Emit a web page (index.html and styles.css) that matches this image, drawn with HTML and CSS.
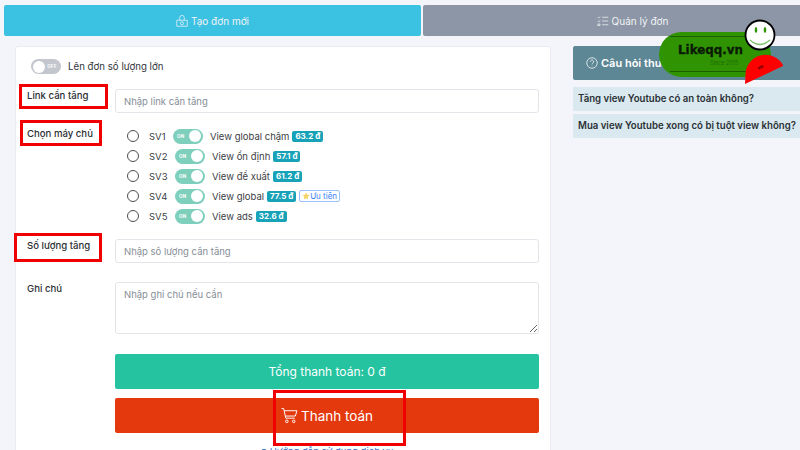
FILE: index.html
```html
<!DOCTYPE html>
<html lang="en">
<head>
    <meta charset="UTF-8">
    <meta name="viewport" content="width=device-width, initial-scale=1.0">
    <title>Likeqq.vn</title>
    <link rel="stylesheet" href="styles.css">
</head>
<body>
    <div class="tabs">
        <div class="tab tab-active">
            <svg class="tab-icon" viewBox="0 0 16 16"><path d="M1 7h14v8H1zM5 7V3.500a3 3 0 0 1 6 0V7"/><circle cx="8" cy="11" r="2"/></svg>
            Tạo đơn mới
        </div>
        <div class="tab tab-manage">
            <svg class="tab-icon" viewBox="0 0 16 16"><path d="M7 3h8M7 8h8M7 13h8M1 3l1.200 1.200L4.200 2M1 8l1.200 1.200L4.200 7M1 12h3v2H1z"/></svg>
            Quản lý đơn
        </div>
    </div>

    <div class="main">
        <div class="card">
            <div class="big-order">
                <span class="switch switch-off"><i></i><b>OFF</b></span>
                <span>Lên đơn số lượng lớn</span>
            </div>

            <div class="form-row row-link">
                <label class="form-label">Link cần tăng</label>
                <input class="form-input" type="text" placeholder="Nhập link cần tăng">
            </div>

            <div class="form-row row-server">
                <label class="form-label">Chọn máy chủ</label>
                <div class="servers">
                    <div class="server server-first">
                        <span class="radio"></span><span class="sv-name">SV1</span>
                        <span class="switch switch-on"><b>ON</b><i></i></span>
                        <span class="sv-desc">View global chậm</span><span class="price">63.2 đ</span>
                    </div>
                    <div class="server">
                        <span class="radio"></span><span class="sv-name">SV2</span>
                        <span class="switch switch-on"><b>ON</b><i></i></span>
                        <span class="sv-desc">View ổn định</span><span class="price">57.1 đ</span>
                    </div>
                    <div class="server">
                        <span class="radio"></span><span class="sv-name">SV3</span>
                        <span class="switch switch-on"><b>ON</b><i></i></span>
                        <span class="sv-desc">View đề xuất</span><span class="price">61.2 đ</span>
                    </div>
                    <div class="server">
                        <span class="radio"></span><span class="sv-name">SV4</span>
                        <span class="switch switch-on"><b>ON</b><i></i></span>
                        <span class="sv-desc">View global</span><span class="price">77.5 đ</span>
                        <span class="priority"><svg viewBox="0 0 10 10"><path d="M5 .5l1.400 2.900 3.100.4-2.300 2.200.6 3.200L5 7.700 2.200 9.200l.6-3.200L.5 3.800l3.100-.4z"/></svg>Ưu tiên</span>
                    </div>
                    <div class="server">
                        <span class="radio"></span><span class="sv-name">SV5</span>
                        <span class="switch switch-on"><b>ON</b><i></i></span>
                        <span class="sv-desc">View ads</span><span class="price">32.6 đ</span>
                    </div>
                </div>
            </div>

            <div class="form-row row-amount">
                <label class="form-label">Số lượng tăng</label>
                <input class="form-input" type="text" placeholder="Nhập số lượng cần tăng">
            </div>

            <div class="form-row row-note">
                <label class="form-label">Ghi chú</label>
                <textarea class="form-input form-area" placeholder="Nhập ghi chú nếu cần"></textarea>
            </div>

            <div class="actions">
                <div class="btn btn-total">Tổng thanh toán: 0 đ</div>
                <div class="btn btn-pay">
                    <svg class="cart-icon" viewBox="0 0 16 16"><path d="M.5 1.500h2l2 9h8.500M3 3.500h12l-1.500 5H4.200"/><circle cx="5.500" cy="13.500" r="1.200"/><circle cx="12" cy="13.500" r="1.200"/></svg>
                    Thanh toán
                </div>
                <div class="guide"><span class="guide-dot"></span>Hướng dẫn sử dụng dịch vụ</div>
            </div>
        </div>

        <div class="side">
            <div class="side-head">
                <svg class="help-icon" viewBox="0 0 16 16"><circle cx="8" cy="8" r="7"/><path d="M5.800 6.200a2.200 2.200 0 1 1 3.400 1.900c-.8.500-1.200.9-1.200 1.700M8 11.500v.8"/></svg>
                Câu hỏi thường gặp
            </div>
            <div class="faq">Tăng view Youtube có an toàn không?</div>
            <div class="faq">Mua view Youtube xong có bị tuột view không?</div>
        </div>
    </div>

    <!-- red marks drawn over the screenshot -->
    <div class="mark mark-link"></div>
    <div class="mark mark-server"></div>
    <div class="mark mark-amount"></div>
    <div class="mark mark-pay"></div>

    <svg class="logo" viewBox="0 0 150 80">
        <rect x="9" y="22" width="112" height="45" rx="22.500" fill="#2f9302"/>
        <path d="M20 26.500h91M20 61.500h91" stroke="#1c5c02" stroke-width="1"/>
        <text x="28" y="44" textLength="65" lengthAdjust="spacingAndGlyphs" class="logo-name">Likeqq.vn</text>
        <text x="60" y="54.500" class="logo-since">Since 2015</text>
        <circle cx="110" cy="25" r="14.500" fill="#fff" stroke="#000" stroke-width="1.800"/>
        <ellipse cx="106" cy="20" rx="1.300" ry="3" fill="#2f9302"/>
        <ellipse cx="115" cy="20" rx="1.300" ry="3" fill="#2f9302"/>
        <path d="M100 30q10 9 20 0" fill="none" stroke="#7cc06a" stroke-width="1.200"/>
        <path d="M95 74L133.300 55.700A20 20 0 0 0 95.700 61.700Z" fill="#fe0000"/>
        <text x="107" y="59" class="logo-vn" transform="rotate(-25 110 57)">VN</text>
    </svg>
</body>
</html>
```

FILE: styles.css
```css
* {
    margin: 0;
    padding: 0;
    box-sizing: border-box;
    font-family: 'Inter', 'Liberation Sans', sans-serif;
}

body {
    width: 800px;
    height: 450px;
    overflow: hidden;
    position: relative;
    background-color: #f4f5fa;
    color: #32363a;
    font-size: 10.5px;
}

.tabs {
    display: flex;
    gap: 2px;
    padding: 5px 0 0 4px;
}

.tab {
    height: 31px;
    flex: 1;
    display: flex;
    align-items: center;
    justify-content: center;
    gap: 3px;
    background-color: #8c96a6;
    color: #f1f3f5;
    font-size: 10px;
    border-radius: 2px 0 0 2px;
}

.tab-active {
    flex: 0 0 417px;
    background-color: #3bc1e2;
    border-radius: 2px;
}

.tab-manage {
    padding-left: 42px;
}

.tab-icon {
    width: 12px;
    height: 12px;
    fill: none;
    stroke: currentColor;
    stroke-width: 1;
}

.main {
    display: flex;
    align-items: flex-start;
    padding: 10px 0 0 15px;
    gap: 22px;
}

.card {
    width: 536px;
    height: 420px;
    flex: none;
    padding: 12px 11px 0 11px;
    background-color: white;
    border: 1px solid #e9ebf0;
    border-radius: 3px;
}

.big-order {
    display: flex;
    align-items: center;
    gap: 7px;
    height: 15px;
    margin-left: 4px;
    font-size: 9.7px;
}

.switch {
    width: 30px;
    height: 15px;
    flex: none;
    display: inline-flex;
    align-items: center;
    justify-content: space-between;
    padding: 0 2px;
    border-radius: 8px;
}

.switch i {
    width: 12px;
    height: 12px;
    border-radius: 50%;
    background-color: white;
}

.switch b {
    font-size: 4.500px;
    color: #fff;
    padding: 0 2px;
    letter-spacing: .3px;
}

.switch-off {
    background-color: #c3c6cd;
}

.switch-on {
    background-color: #7fcfbd;
}

.form-row {
    display: flex;
}

.form-label {
    flex: 0 0 88px;
    font-size: 9.6px;
    font-weight: 500;
    color: #2c3034;
}

.form-input {
    flex: none;
    display: block;
    width: 424px;
    height: 24px;
    padding: 0 8px;
    font-size: 9.5px;
    color: #32363a;
    border: 1px solid #e3e5ea;
    border-radius: 3px;
    background-color: white;
}

.form-input::placeholder {
    color: #868e96;
    opacity: 1;
}

.form-area {
    height: 52px;
    padding-top: 6px;
}

.row-link {
    margin-top: 15px;
}

.row-link .form-label {
    padding-top: 1px;
}

.row-server {
    margin-top: 11px;
    height: 96px;
}

.row-server .form-label {
    padding-top: 4px;
}

.servers {
    padding: 2px 0 0 12px;
}

.server {
    display: flex;
    align-items: center;
    height: 20px;
    color: #3b4045;
    font-size: 9.5px;
}

.radio {
    width: 12px;
    height: 12px;
    margin-right: 10px;
    border: 1.300px solid #4a4e52;
    border-radius: 50%;
}

.sv-name {
    width: 26px;
}

.sv-desc {
    margin: 0 3px 0 7px;
}

.server-first .switch {
    margin-left: -2px;
}

.price {
    height: 11px;
    line-height: 11px;
    padding: 0 3px;
    font-size: 8px;
    font-weight: 700;
    color: white;
    background-color: #17a2b8;
    border-radius: 2px;
}

.priority {
    display: inline-flex;
    align-items: center;
    height: 12px;
    margin-left: 3px;
    padding: 0 2px;
    font-size: 8px;
    color: #3b82f6;
    border: 1px solid #9cc0fa;
    border-radius: 2px;
}

.priority svg {
    width: 8px;
    height: 8px;
    fill: #f6d365;
}

.row-amount {
    margin-top: 19px;
}

.row-amount .form-label {
    padding-top: 1px;
}

.row-note {
    margin-top: 19px;
}

.row-note .form-label {
    padding-top: 1px;
}

.actions {
    margin: 20px 0 0 88px;
    width: 424px;
}

.btn {
    height: 35px;
    display: flex;
    align-items: center;
    justify-content: center;
    color: white;
    border-radius: 2px;
}

.btn-total {
    background-color: #25c3a0;
    font-size: 12px;
}

.btn-pay {
    gap: 3px;
    margin-top: 9px;
    background-color: #e4390d;
    font-size: 13.5px;
}

.cart-icon {
    width: 17px;
    height: 17px;
    fill: none;
    stroke: white;
    stroke-width: .9;
}

.guide {
    margin-top: 13px;
    text-align: center;
    font-size: 9.5px;
    color: #2f6fd0;
}

.guide-dot {
    display: inline-block;
    width: 6px;
    height: 6px;
    margin-right: 3px;
    border-radius: 50%;
    background-color: #2f6fd0;
}

.side {
    width: 240px;
    flex: none;
}

.side-head {
    height: 34px;
    display: flex;
    align-items: center;
    gap: 3px;
    padding-left: 13px;
    margin-bottom: 7px;
    font-size: 11px;
    font-weight: 600;
    color: white;
    background-color: #5e8796;
    border-radius: 2px 0 0 2px;
}

.help-icon {
    width: 12px;
    height: 12px;
    fill: none;
    stroke: white;
    stroke-width: 1;
}

.faq {
    height: 24px;
    line-height: 24px;
    padding-left: 5px;
    margin-bottom: 3px;
    font-size: 9.65px;
    font-weight: 600;
    color: #2b3035;
    white-space: nowrap;
    background-color: #d9e9ef;
}

.mark {
    position: absolute;
    border: 3px solid #f00000;
}

.mark-link {
    left: 19px;
    top: 84px;
    width: 89px;
    height: 25px;
}

.mark-server {
    left: 20px;
    top: 120px;
    width: 82px;
    height: 26px;
}

.mark-amount {
    left: 14px;
    top: 233px;
    width: 88px;
    height: 29px;
}

.mark-pay {
    left: 273px;
    top: 390px;
    width: 133px;
    height: 56px;
}

.logo {
    position: absolute;
    left: 650px;
    top: 10px;
    width: 150px;
    height: 80px;
}

.logo-name {
    font-family: 'DejaVu Sans', sans-serif;
    font-size: 13px;
    font-weight: 700;
    fill: #0b1a05;
    stroke: #0b1a05;
    stroke-width: .3;
}

.logo-since {
    font-size: 5.5px;
    fill: #1f6a02;
}

.logo-vn {
    font-size: 4px;
    font-weight: 700;
    fill: #400;
}
```
